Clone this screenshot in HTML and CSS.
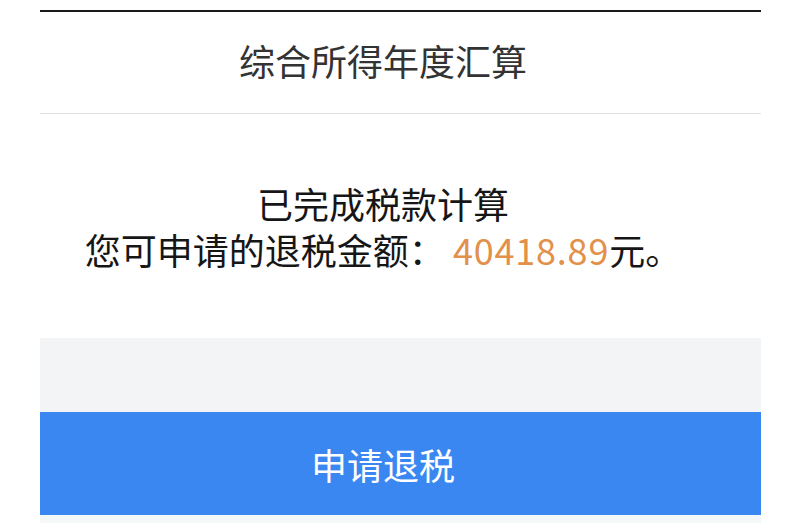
FILE: index.html
```html
<!DOCTYPE html>
<html lang="zh-CN">
<head>
<meta charset="utf-8">
<link rel="stylesheet" href="styles.css">
</head>
<body>
<div class="page">
  <header class="header">
    <h1 class="title">综合所得年度汇算</h1>
  </header>
  <section class="result">
    <p class="line">已完成税款计算</p>
    <p class="line">您可申请的退税金额： <span class="amount">40418.89</span>元。</p>
  </section>
  <div class="spacer"></div>
  <button class="apply">申请退税</button>
  <div class="footer"></div>
</div>
</body>
</html>
```
FILE: styles.css
```css
html, body {
  margin: 0;
  padding: 0;
  background: #ffffff;
}
body {
  font-family: "Noto Sans CJK SC", "Noto Sans", sans-serif;
  width: 789px;
  height: 523px;
  overflow: hidden;
}
.page {
  padding: 10px 28px 0 40px;
}
.header {
  border-top: 2px solid #1a1a1a;
  border-bottom: 1px solid #e2e2e2;
  height: 101px;
  display: flex;
  align-items: center;
  justify-content: center;
  padding-right: 35px;
  box-sizing: content-box;
}
.title {
  margin: 0;
  margin-top: -5px;
  font-weight: 400;
  font-size: 36px;
  color: #333333;
  line-height: 1;
}
.result {
  height: 224px;
  display: flex;
  flex-direction: column;
  align-items: center;
  justify-content: center;
  padding-right: 35px;
  padding-top: 0;
  box-sizing: border-box;
}
.line {
  margin: 0;
  font-size: 36px;
  line-height: 46px;
  color: #161616;
  white-space: nowrap;
}
.amount {
  color: #e2904a;
  letter-spacing: 0.8px;
}
.spacer {
  height: 74px;
  background: #f3f4f6;
}
.apply {
  display: block;
  width: 100%;
  height: 103px;
  border: none;
  margin: 0;
  padding: 0 35px 0 0;
  background: #3a87f2;
  color: #ffffff;
  font-family: "Noto Sans CJK SC", "Noto Sans", sans-serif;
  font-size: 36px;
  font-weight: 400;
}
.footer {
  height: 10px;
  background: #f5f8f8;
}
```
